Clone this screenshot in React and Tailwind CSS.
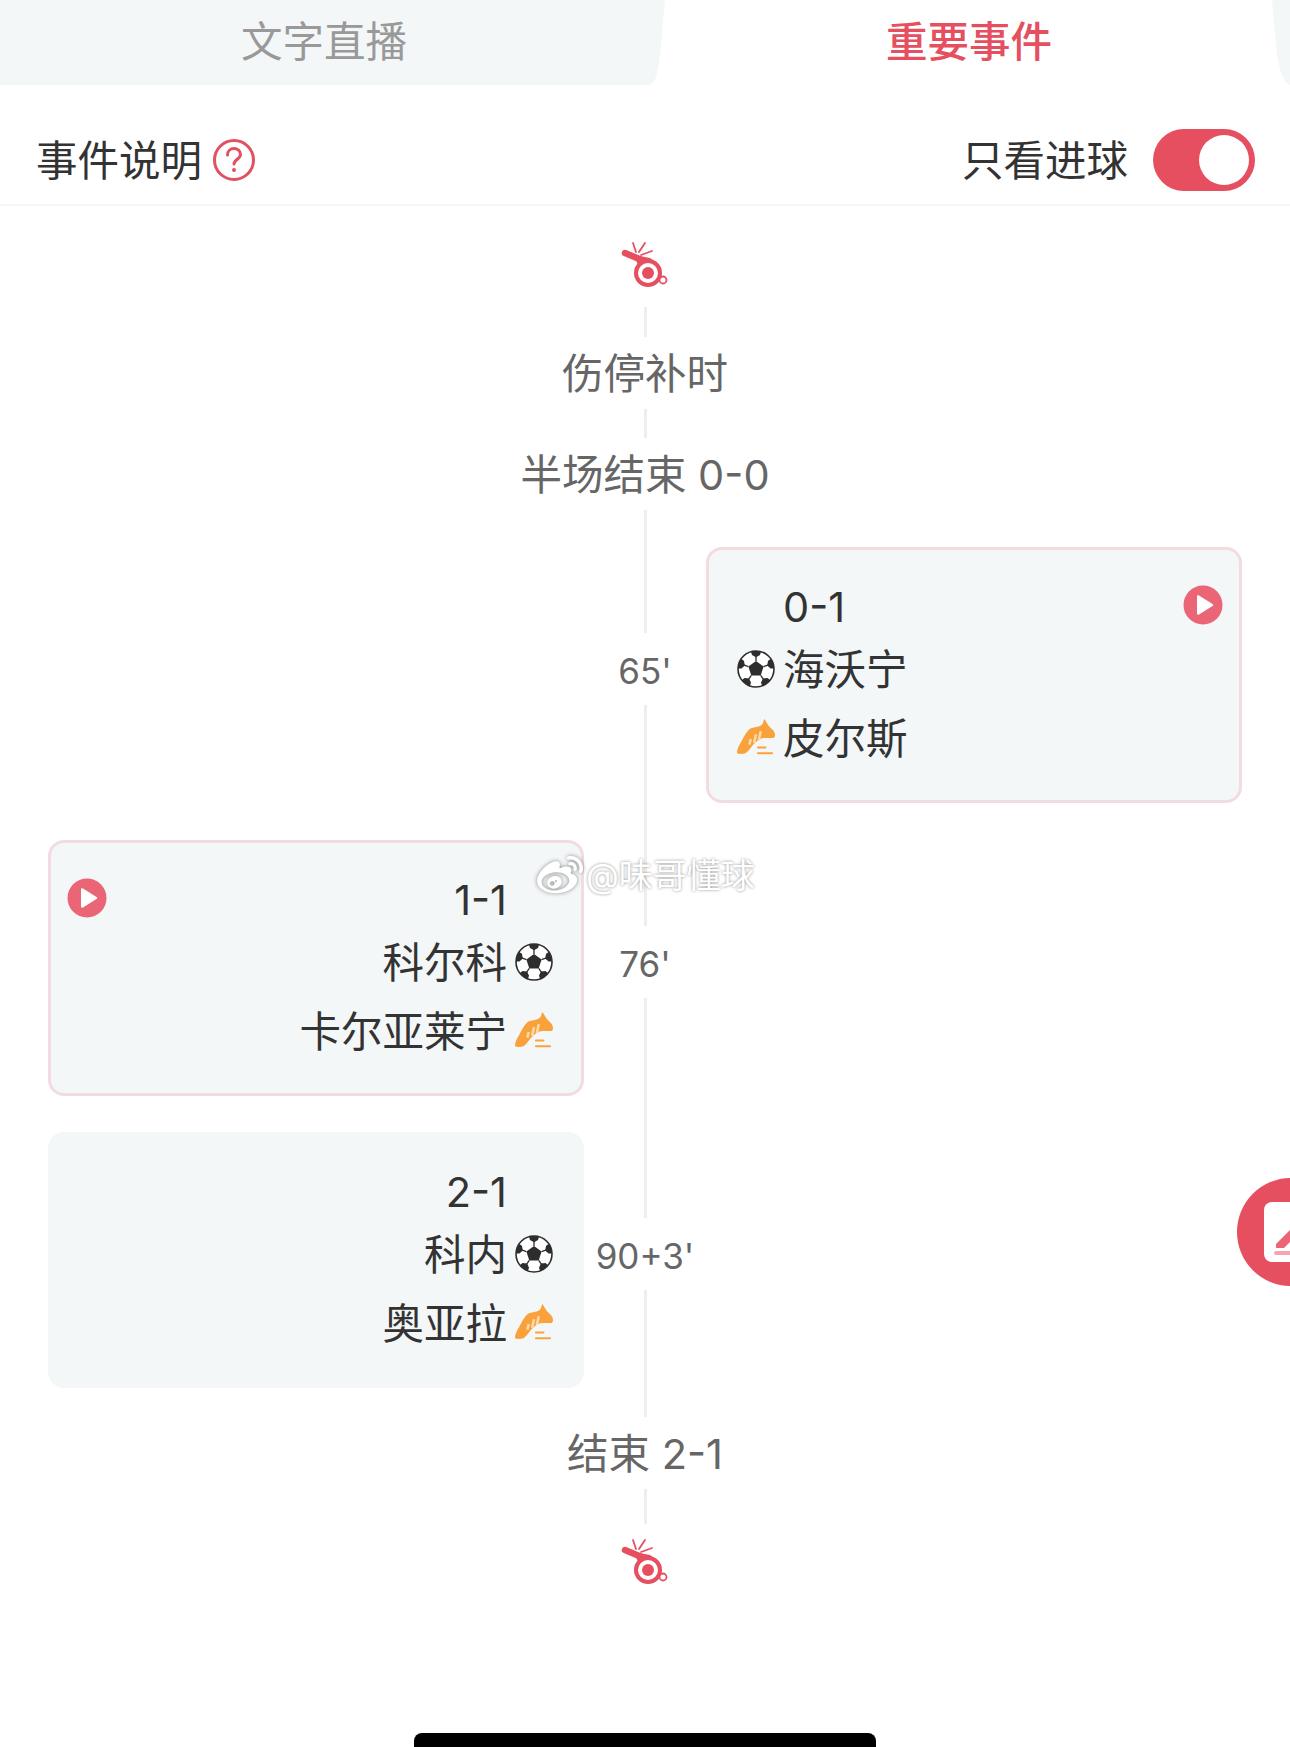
import { FaWeibo } from 'react-icons/fa'

const font = { fontFamily: 'Inter, "Noto Sans CJK SC", "Noto Sans", sans-serif' }

function Whistle() {
  return (
    <svg width="50" height="50" viewBox="0 0 50 50" className="block">
      <path d="M13 3l3 9M25 3l-6 9M32 11l-11 4" stroke="#e54f5f" strokeWidth="1.800" strokeLinecap="round" fill="none" />
      <path d="M5 13l19 8" stroke="#e54f5f" strokeWidth="6.500" strokeLinecap="round" fill="none" />
      <path d="M14 15l16 3 8 6-18 6z" fill="#e54f5f" />
      <circle cx="28" cy="33" r="14" fill="#e54f5f" />
      <circle cx="28" cy="33" r="10" fill="#fff" />
      <circle cx="28" cy="33" r="6" fill="#e54f5f" />
      <circle cx="43" cy="40" r="3.500" fill="#fff" stroke="#e54f5f" strokeWidth="1.800" />
    </svg>
  )
}

function Ball() {
  return (
    <svg width="38" height="38" viewBox="0 0 38 38" className="block shrink-0">
      <defs>
        <clipPath id="ball-clip"><circle cx="19" cy="19" r="18" /></clipPath>
      </defs>
      <circle cx="19" cy="19" r="18" fill="#fff" />
      <g clipPath="url(#ball-clip)" fill="#2d2d2d">
        <path d="M19 11l7.600 5.500-2.900 9h-9.400l-2.900-9z" />
        {[0, 72, 144, 216, 288].map((a) => (
          <g key={a} transform={`rotate(${a} 19 19)`}>
            <path d="M13.500 0h11l-1.500 5-4 2.300-4-2.300z" />
            <path d="M19 11V6" stroke="#2d2d2d" strokeWidth="1.300" />
          </g>
        ))}
      </g>
      <circle cx="19" cy="19" r="18" fill="none" stroke="#2d2d2d" strokeWidth="1.600" />
    </svg>
  )
}

function Boot() {
  return (
    <svg width="38" height="38" viewBox="0 0 40 40" className="block shrink-0">
      <path d="M0 36c0-5 3-9 5-13 3-6 6-11 9-13 5-2 10-1 13-5 1-2 1-4 2-5 2 3 3 6 6 9 2 2 5 4 5 8 0 2-1 3-3 3H29c-4 0-8 3-11 6-3 3-5 7-9 10-3 1-7 1-9 0z" fill="#f9a23c" />
      <path d="M13 27l1.500-6M18 25l2-9M23 22l2-9" stroke="#fcdcae" strokeWidth="2.600" />
      <path d="M22 30h8M22 36h15" stroke="#f9a23c" strokeWidth="2" strokeLinecap="round" />
    </svg>
  )
}

function PlayIcon() {
  return (
    <svg width="40" height="40" viewBox="0 0 40 40" className="block shrink-0">
      <circle cx="20" cy="20" r="19.500" fill="#ea6676" />
      <path d="M14 11.500c0-1 1-1.500 2-1l13.500 8.500c1 .6 1 1.500 0 2L16 29.500c-1 .5-2 0-2-1z" fill="#fff" />
    </svg>
  )
}

function Seg({ className = '' }) {
  return <div className={`w-[3px] bg-[#eeeeee] ${className}`} />
}

function Label({ children, small }) {
  return (
    <div className={`h-[72px] flex items-center justify-center leading-none text-[#666] whitespace-nowrap pt-[4px] ${small ? 'text-[35px]' : 'text-[41.5px]'}`}>
      {children}
    </div>
  )
}

function PlayerRow({ icon, name, side }) {
  return (
    <div className={`h-[69px] flex items-center gap-[8px] ${side === 'left' ? 'justify-end' : ''}`}>
      {side === 'right' && icon}
      <span className="text-[41.5px] leading-none text-[#333] pt-[5px]">{name}</span>
      {side === 'left' && icon}
    </div>
  )
}

function Card({ score, scorer, assist, side, video }) {
  const border = video ? 'border-[3px] border-[#f3dbe2]' : 'border-[3px] border-[#f4f7f8]'
  return (
    <div className={`relative w-[536px] h-[256px] rounded-[16px] bg-[#f4f7f8] ${border} ${side === 'left' ? 'pr-[28px] pl-[16px]' : 'pl-[28px] pr-[16px]'} pt-[26px]`}>
      <div className="flex items-center h-[58px]">
        {side === 'left' && video && <PlayIcon />}
        <span className={`text-[41.5px] leading-none text-[#333] pt-[5px] ${side === 'left' ? 'ml-auto mr-[46px]' : 'ml-[46px]'}`}>{score}</span>
        {side === 'right' && video && <div className="ml-auto"><PlayIcon /></div>}
      </div>
      <PlayerRow side={side} name={scorer} icon={<Ball />} />
      <PlayerRow side={side} name={assist} icon={<Boot />} />
    </div>
  )
}

function EventRow({ time, side, height, ...card }) {
  return (
    <div className={`flex pl-[48px] ${height}`}>
      <div className="w-[536px] shrink-0">{side === 'left' && <Card side={side} {...card} />}</div>
      <div className="w-[122px] shrink-0 flex flex-col items-center">
        <Seg className="h-[86px]" />
        <Label small>{time}</Label>
        <Seg className="flex-1" />
      </div>
      <div>{side === 'right' && <Card side={side} {...card} />}</div>
    </div>
  )
}

export default function App() {
  return (
    <div style={font} className="relative w-[1290px] h-[1747px] bg-white overflow-hidden">
      <div className="flex h-[85px] bg-white">
        <div className="w-[648px] bg-[#f4f7f8] flex items-center justify-center text-[41.5px] leading-none text-[#999]">文字直播</div>
        <svg width="18" height="85" viewBox="0 0 18 85" className="block shrink-0">
          <path d="M0 0h17c-2 20-3 42-6 62-2 14-4 23-11 23z" fill="#f4f7f8" />
        </svg>
        <div className="flex-1 flex items-center justify-center text-[41.5px] leading-none font-medium text-[#e54f5f]">重要事件</div>
        <svg width="18" height="85" viewBox="0 0 18 85" className="block shrink-0">
          <path d="M0 0h18v85c-8-3-12-20-14-40z" fill="#f4f7f8" />
        </svg>
      </div>

      <div className="h-[121px] pt-[30px] flex items-center justify-between pl-[36px] pr-[35px] border-b-2 border-[#f5f6f7]">
        <div className="flex items-center gap-[10px]">
          <span className="text-[41.5px] leading-none text-[#333] pt-[5px]">事件说明</span>
          <svg width="44" height="44" viewBox="0 0 44 44" className="block">
            <circle cx="22" cy="22" r="19.500" fill="none" stroke="#e0525f" strokeWidth="3" />
            <path d="M15.500 17c0-4 3-6.500 6.500-6.500s6.500 2.500 6.500 6c0 4.500-6.500 5-6.500 9.500" fill="none" stroke="#e0525f" strokeWidth="3" strokeLinecap="round" />
            <circle cx="22" cy="32" r="2" fill="#e0525f" />
          </svg>
        </div>
        <div className="flex items-center gap-[25px]">
          <span className="text-[41.5px] leading-none text-[#333] pt-[5px]">只看进球</span>
          <div className="w-[102px] h-[62px] rounded-full bg-[#e54f5f] flex items-center justify-end pr-[6px]">
            <div className="w-[50px] h-[50px] rounded-full bg-white" />
          </div>
        </div>
      </div>

      <div className="flex flex-col">
        <div className="flex flex-col items-center pt-[34px]">
          <Whistle />
          <Seg className="mt-[17px] h-[30px]" />
          <Label>伤停补时</Label>
          <Seg className="h-[29px]" />
          <Label>半场结束 0-0</Label>
          <Seg className="h-[37px]" />
        </div>
        <EventRow height="h-[293px]" time="65'" side="right" video score="0-1" scorer="海沃宁" assist="皮尔斯" />
        <EventRow height="h-[292px]" time="76'" side="left" video score="1-1" scorer="科尔科" assist="卡尔亚莱宁" />
        <EventRow height="h-[285px]" time="90+3'" side="left" score="2-1" scorer="科内" assist="奥亚拉" />
        <div className="flex flex-col items-center">
          <Label>结束 2-1</Label>
          <Seg className="h-[35px]" />
          <div className="mt-[13px]"><Whistle /></div>
        </div>
      </div>

      {/* weibo watermark */}
      <div className="absolute left-[537px] top-[853px] flex items-center gap-[3px] text-white [text-shadow:0_0_3px_rgba(0,0,0,0.45)]">
        <FaWeibo className="text-[46px] drop-shadow-[0_0_2px_rgba(0,0,0,0.45)]" />
        <span className="text-[34px] leading-none whitespace-nowrap">@味哥懂球</span>
      </div>

      {/* floating edit button */}
      <div className="absolute left-[1237px] top-[1178px] w-[108px] h-[108px] rounded-full bg-[#e54f5f] flex items-center pl-[27px]">
        <div className="relative w-[60px] h-[60px] rounded-[8px] bg-white">
          <svg width="54" height="60" viewBox="0 0 54 60" className="block">
            <path d="M12 42l22-22 6 6-20 20H12z" fill="#ea6676" />
            <rect x="10" y="49" width="44" height="4" rx="2" fill="#f4a6b0" />
          </svg>
        </div>
      </div>

      {/* home indicator */}
      <div className="absolute left-[414px] top-[1733px] w-[462px] h-[14px] rounded-t-[8px] bg-black" />
    </div>
  )
}
